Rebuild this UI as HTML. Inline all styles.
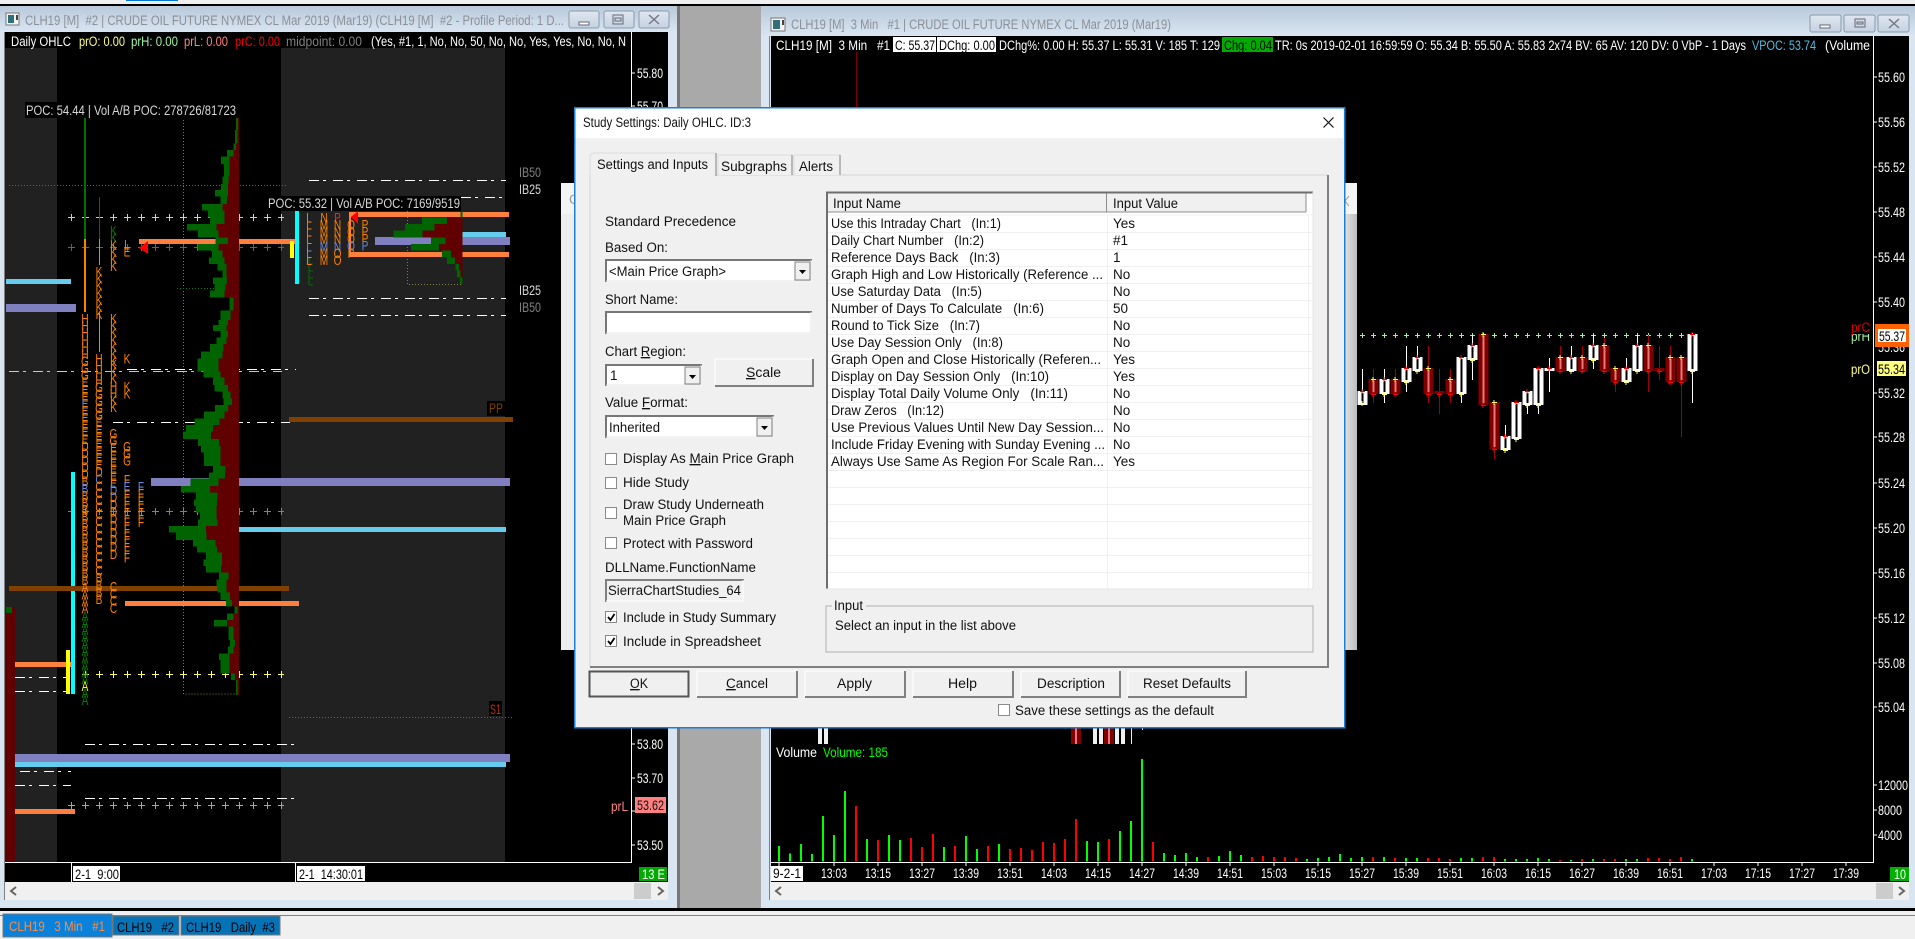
<!DOCTYPE html>
<html lang="en"><head><meta charset="utf-8"><title>Study Settings</title>
<style>
html,body{margin:0;padding:0;background:#000;width:1915px;height:939px;overflow:hidden}
svg{display:block}
text{font-family:"Liberation Sans",sans-serif;white-space:pre}
rect,path,line{shape-rendering:crispEdges}
.aa{shape-rendering:auto}
.c{font-size:13.5px;fill:#fff}
.d{font-size:13.5px;fill:#111}
.t{font-size:13.5px;fill:#8b9097}
.v{writing-mode:vertical-rl;text-orientation:upright;font-size:14px;letter-spacing:-9px;fill:#ff8000}
.b{fill:#6a88e0}
.u{text-decoration:underline}
.dd{stroke-dasharray:10 4 3 7;stroke:#fff;fill:none}
</style></head><body>
<svg xmlns="http://www.w3.org/2000/svg" width="1915" height="939" viewBox="0 0 1915 939">
<defs>
<linearGradient id="tb" x1="0" y1="0" x2="0" y2="1"><stop offset="0" stop-color="#b9c9da"/><stop offset="1" stop-color="#d9e5f1"/></linearGradient>
<linearGradient id="bt" x1="0" y1="0" x2="0" y2="1"><stop offset="0" stop-color="#dfe7f0"/><stop offset="1" stop-color="#c4d2e0"/></linearGradient>
<linearGradient id="sh" x1="0" y1="0" x2="1" y2="0"><stop offset="0" stop-color="#e4e4e4"/><stop offset="1" stop-color="#bcbcbc"/></linearGradient>
</defs>

<!-- desktop -->
<rect width="1915" height="939" fill="#a9a9a9"/>
<rect width="1915" height="4" fill="#f0f0f0"/>
<rect x="126" width="52" height="1" fill="#0078d7"/>
<rect y="4" width="1915" height="2" fill="#000"/>

<!-- LEFT WINDOW -->
<rect x="0" y="6" width="677" height="902" fill="#d9e5f1"/>
<rect x="677" y="6" width="3" height="902" fill="#777"/>
<rect x="0" y="6" width="677" height="26" fill="url(#tb)"/>
<rect x="4" y="32" width="1" height="868" fill="#808080"/>
<rect x="6" y="13" width="13" height="12" fill="#f4f4f4" stroke="#777"/>
<rect x="8" y="15" width="6" height="8" fill="#2f6f78"/>
<rect x="16" y="15" width="2" height="5" fill="#444"/>
<text class="t" x="25" y="25" textLength="539" lengthAdjust="spacingAndGlyphs">CLH19 [M]  #2 | CRUDE OIL FUTURE NYMEX CL Mar 2019 (Mar19) (CLH19 [M]  #2 - Profile Period: 1 D...</text>
<rect x="569" y="11" width="30" height="17" rx="2" fill="url(#bt)" stroke="#8a9aac"/>
<rect x="579" y="22" width="10" height="3" fill="#fff" stroke="#667"/>
<rect x="604" y="11" width="30" height="17" rx="2" fill="url(#bt)" stroke="#8a9aac"/>
<rect x="613" y="15" width="10" height="9" fill="none" stroke="#667"/><rect x="615" y="18" width="6" height="3" fill="none" stroke="#667"/>
<rect x="639" y="11" width="30" height="17" rx="2" fill="url(#bt)" stroke="#8a9aac"/>
<path class="aa" d="M649 15l10 9M659 15l-10 9" stroke="#778" stroke-width="1.500" fill="none"/>

<rect x="5" y="32" width="663" height="850" fill="#000"/>
<rect x="5" y="48" width="52" height="814" fill="#212121"/>
<rect x="281" y="48" width="224" height="814" fill="#212121"/>

<!-- dotted boxes -->
<path d="M183.5 117V694H239M183 117.5H239M407.5 211V284.5H463" fill="none" stroke="#808040" stroke-dasharray="1 2"/>
<path d="M9 185.500H288" stroke="#c04020" stroke-dasharray="1 2"/>
<path d="M289 717.500H512" stroke="#c04020" stroke-dasharray="1 2"/>
<path d="M177 288.500H240" stroke="#0a7a0a" stroke-dasharray="1 2"/>

<!-- plus rows -->
<g fill="none">
<path d="M68 217.500H284" stroke="#a0f0a0" stroke-dasharray="7 7"/><path d="M71 217.500H282" stroke="#a0f0a0" stroke-width="7" stroke-dasharray="1 13"/>
<path d="M68 247.500H284" stroke="#ff2020" stroke-dasharray="7 7"/><path d="M71 247.500H282" stroke="#ff2020" stroke-width="7" stroke-dasharray="1 13"/>
<path d="M68 511.500H284" stroke="#808080" stroke-dasharray="7 7"/><path d="M71 511.500H282" stroke="#808080" stroke-width="7" stroke-dasharray="1 13"/>
<path d="M82 674.500H284" stroke="#ffff60" stroke-dasharray="7 7"/><path d="M85 674.500H282" stroke="#ffff60" stroke-width="7" stroke-dasharray="1 13"/>
<path d="M68 805.500H284" stroke="#ff8080" stroke-dasharray="7 7"/><path d="M71 805.500H282" stroke="#ff8080" stroke-width="7" stroke-dasharray="1 13"/>
</g>

<!-- dash-dot lines -->
<g>
<path class="dd" d="M309 180.500H506"/><path class="dd" d="M461 197.500H506"/><path class="dd" d="M309 298.500H506"/><path class="dd" d="M309 315.500H506"/>
<path class="dd" d="M127 369.500H296"/><path class="dd" style="stroke:#c8c8c8" d="M9 371.500H282"/><path class="dd" d="M113 422.500H290"/>
<path class="dd" d="M85 744.500H296"/><path class="dd" d="M85 798.500H296"/>
<path class="dd" d="M15 677.500H67"/><path class="dd" d="M15 691.500H67"/><path class="dd" d="M20 771.500H71"/><path class="dd" d="M15 785.500H71"/>
</g>

<!-- thick lines -->
<g>
<rect x="6" y="607" width="9" height="255" fill="#600000"/><rect x="6" y="607" width="6" height="6" fill="#006000"/>
<rect x="139" y="239" width="156" height="5" fill="#ff7f3f"/>
<rect x="349" y="212" width="160" height="5" fill="#ff7f3f"/>
<rect x="349" y="252" width="160" height="5" fill="#ff7f3f"/>
<rect x="349" y="212" width="2" height="45" fill="#ff7f3f"/>
<rect x="462" y="232" width="44" height="5" fill="#66ccee"/>
<rect x="375" y="237" width="135" height="8" fill="#8080c0"/>
<rect x="6" y="279" width="65" height="5" fill="#66ccee"/>
<rect x="6" y="304" width="70" height="8" fill="#8080c0"/>
<rect x="151" y="478" width="359" height="8" fill="#8080c0"/>
<rect x="239" y="527" width="267" height="5" fill="#66ccee"/>
<rect x="15" y="754" width="495" height="8" fill="#8080c0"/>
<rect x="15" y="762" width="491" height="5" fill="#66ccee"/>
<rect x="289" y="417" width="224" height="5" fill="#804000"/>
<rect x="125" y="601" width="174" height="5" fill="#ff7f3f"/>
<rect x="15" y="662" width="56" height="5" fill="#ff7f3f"/>
<rect x="15" y="809" width="60" height="5" fill="#ff7f3f"/>
<rect x="295" y="211" width="4" height="73" fill="#00ffff"/>
<rect x="290" y="241" width="4" height="17" fill="#ffff00"/>
<rect x="71" y="472" width="4" height="222" fill="#00ffff"/>
<rect x="66" y="650" width="4" height="44" fill="#ffff00"/>
<rect x="9" y="586" width="280" height="5" fill="#804000"/>
<path d="M85 117V239" stroke="#007000" stroke-width="2"/><path d="M85 239V312" stroke="#ff8000" stroke-width="2"/>
<path d="M99.500 197V239M309 258V285" stroke="#007000"/><path d="M99.500 239V265M99.500 312V352" stroke="#ff8000"/>
<path d="M309 264h4M309 271h4M309 278h4M309 285h4" stroke="#007000"/>
</g>

<!-- profiles -->
<g transform="scale(.40816 .33333)">
<path fill="#006400" d="M586 351H578V390H576V430H572V450H556V470H541V492H549V530H545V552H542V570H527V590H540V612H495V632H510V652H515V672H458V692H485V712H528V732H485V752H520V772H512V792H533V812H545V832H522V852H525V872H514V892H562V932H540V960H535V975H522V993H540V1012H530V1032H515V1055H492V1075H484V1115H498V1133H522V1155H525V1175H545V1195H548V1215H527V1235H500V1255H476V1275H456V1295H448V1317H485V1338H492V1358H500V1398H522V1418H512V1436H467V1458H443V1478H480V1498H475V1518H480V1538H490V1558H485V1578H414V1598H431V1620H473V1640H483V1658H505V1678H498V1698H505V1718H537V1738H530V1758H533V1778H540V1800H554V1820H574V1840H556V1860H524V1880H560V1920H563V1940H558V1960H537V1980H540V2020H566V2040H578V2085H586Z"/>
<path fill="#600000" d="M586 351H583V390H582V430H578V450H572V470H562V530H560V552H558V590H556V612H545V632H550V672H530V692H535V712H558V732H535V752H545V772H550V792H555V832H556V852H553V872H550V892H572V932H565V960H558V975H555V993H558V1012H555V1032H548V1055H545V1075H535V1115H540V1133H550V1155H558V1175H565V1195H568V1215H558V1235H550V1255H538V1275H522V1295H517V1317H537V1338H540V1398H553V1418H551V1436H535V1458H514V1478H533V1498H532V1518H530V1558H533V1578H505V1598H506V1620H528V1640H532V1658H544V1698H542V1718H560V1738H555V1778H563V1800H568V1820H582V1840H572V1860H556V1880H572V1920H576V1940H572V1960H562V2020H576V2040H582V2085H586Z"/>
<path fill="#006400" d="M1133 634H1128V652H1034V672H992V692H964V712H1056V732H1007V752H1083V772H1095V792H1116V812H1120V832H1127V852H1133Z"/>
<path fill="#600000" d="M1133 652H1095V672H1065V692H1035V712H1092V732H1075V752H1105V772H1115V792H1125V812H1128V832H1133Z"/>
</g>

<!-- TPO letters -->
<g transform="scale(.72 1)">
<text class="v" x="118" y="311">HHHHHHGGGEEE<tspan class="b">E</tspan>EEEEEDDDDDB<tspan class="b">B</tspan>BBBBBBBBBBBBBAAAA<tspan fill="#008000">AAAAAAAAAA</tspan><tspan fill="#ffff00">A</tspan><tspan fill="#008000">AA</tspan></text>
<text class="v" x="137.500" y="264">KKKKKKK</text>
<text class="v" x="137.500" y="351">HHHHGGGGGEEEEEEED<tspan class="b">C</tspan>CCCCCCCCCCCCCBBBB</text>
<text class="v" x="157.600" y="223"><tspan fill="#008000">KK</tspan>KKKK</text>
<text class="v" x="157.600" y="311">KKKKKKK</text>
<text class="v" x="157.600" y="357">KKKHHKK</text>
<text class="v" x="157.600" y="426">GGEEEEEE<tspan class="b">D</tspan>DDDDDDDDD</text>
<text class="v" x="157.600" y="579">CCCC</text>
<text class="v" x="176.400" y="237">LE</text>
<text class="v" x="176.400" y="351">K</text>
<text class="v" x="176.400" y="379">KK</text>
<text class="v" x="176.400" y="439">GGG</text>
<text class="v" x="176.400" y="472">F<tspan class="b">E</tspan>FFFFFFFFFF</text>
<text class="v" x="195.800" y="479"><tspan class="b">F</tspan>FFFFF</text>
<text class="v" x="429.200" y="210">LLLL<tspan class="b">L</tspan>LL</text>
<text class="v" x="450" y="210">NMMM<tspan class="b">M</tspan>MM</text>
<text class="v" x="468.800" y="210"><tspan fill="#ff2020">P</tspan>NNN<tspan class="b">N</tspan>OO</text>
<text class="v" x="487.500" y="217">OOO<tspan class="b">O</tspan>P</text>
<text class="v" x="507" y="217">PPP<tspan class="b">P</tspan></text>
</g>
<polygon points="139,248 148,241 148,254" fill="#ff0000"/>
<polygon points="351,217 358,211 358,224" fill="#ff0000"/>

<!-- labels on left chart -->
<rect x="25" y="102" width="215" height="16" fill="#000"/>
<text class="c" x="26" y="115" style="fill:#d8d8d8" textLength="210" lengthAdjust="spacingAndGlyphs">POC: 54.44 | Vol A/B POC: 278726/81723</text>
<rect x="265" y="196" width="196" height="15" fill="#000"/>
<text class="c" x="268" y="208" style="fill:#d8d8d8" textLength="192" lengthAdjust="spacingAndGlyphs">POC: 55.32 | Vol A/B POC: 7169/9519</text>
<text class="c" x="519" y="177" style="fill:#808080" textLength="22" lengthAdjust="spacingAndGlyphs">IB50</text>
<text class="c" x="519" y="194" style="fill:#d8d8d8" textLength="22" lengthAdjust="spacingAndGlyphs">IB25</text>
<text class="c" x="519" y="295" style="fill:#d8d8d8" textLength="22" lengthAdjust="spacingAndGlyphs">IB25</text>
<text class="c" x="519" y="312" style="fill:#808080" textLength="22" lengthAdjust="spacingAndGlyphs">IB50</text>
<rect x="487" y="401" width="18" height="15" fill="#000"/>
<text class="c" x="489" y="413" style="fill:#804000" textLength="14" lengthAdjust="spacingAndGlyphs">PP</text>
<rect x="489" y="701" width="13" height="15" fill="#000"/>
<text class="c" x="490" y="714" style="fill:#c03000" textLength="11" lengthAdjust="spacingAndGlyphs">S1</text>

<!-- left header -->
<rect x="5" y="32" width="626" height="16" fill="#000"/>
<text class="c" x="11" y="46" textLength="60" lengthAdjust="spacingAndGlyphs">Daily OHLC</text>
<text class="c" x="79" y="46" style="fill:#ffff80" textLength="46" lengthAdjust="spacingAndGlyphs">prO: 0.00</text>
<text class="c" x="131" y="46" style="fill:#a0f0a0" textLength="47" lengthAdjust="spacingAndGlyphs">prH: 0.00</text>
<text class="c" x="184" y="46" style="fill:#ff8080" textLength="44" lengthAdjust="spacingAndGlyphs">prL: 0.00</text>
<text class="c" x="235" y="46" style="fill:#ff0000" textLength="45" lengthAdjust="spacingAndGlyphs">prC: 0.00</text>
<text class="c" x="286" y="46" style="fill:#808080" textLength="76" lengthAdjust="spacingAndGlyphs">midpoint: 0.00</text>
<text class="c" x="371" y="46" textLength="255" lengthAdjust="spacingAndGlyphs">(Yes, #1, 1, No, No, 50, No, No, Yes, Yes, No, No, N</text>

<!-- left axes -->
<rect x="631" y="32" width="1" height="831" fill="#fff"/>
<rect x="5" y="862" width="626" height="1" fill="#fff"/>
<rect x="71" y="862" width="1" height="20" fill="#fff"/>
<rect x="295" y="862" width="1" height="20" fill="#fff"/>
<path d="M632 73h3M632 106h3M632 744h3M632 778h3M632 811h3M632 845h3" stroke="#fff"/>
<text class="c" x="637" y="78" textLength="26" lengthAdjust="spacingAndGlyphs">55.80</text>
<text class="c" x="637" y="111" textLength="26" lengthAdjust="spacingAndGlyphs">55.70</text>
<text class="c" x="637" y="749" textLength="26" lengthAdjust="spacingAndGlyphs">53.80</text>
<text class="c" x="637" y="783" textLength="26" lengthAdjust="spacingAndGlyphs">53.70</text>
<text class="c" x="637" y="850" textLength="26" lengthAdjust="spacingAndGlyphs">53.50</text>
<text class="c" x="611" y="811" style="fill:#ff8080" textLength="17" lengthAdjust="spacingAndGlyphs">prL</text>
<rect x="635" y="797" width="31" height="16" fill="#ff8080"/>
<text class="c" x="637" y="810" style="fill:#111" textLength="27" lengthAdjust="spacingAndGlyphs">53.62</text>
<rect x="73" y="866" width="47" height="15" fill="#fff"/>
<text class="c" x="75" y="879" style="fill:#000" textLength="44" lengthAdjust="spacingAndGlyphs">2-1  9:00</text>
<rect x="297" y="866" width="68" height="15" fill="#fff"/>
<text class="c" x="299" y="879" style="fill:#000" textLength="64" lengthAdjust="spacingAndGlyphs">2-1  14:30:01</text>
<rect x="639" y="867" width="28" height="14" fill="#00aa00"/>
<text class="c" x="642" y="879" textLength="23" lengthAdjust="spacingAndGlyphs">13 E</text>
<rect x="5" y="882" width="663" height="18" fill="#f0f0f0"/>
<path class="aa" d="M16 887l-5 4 5 4" stroke="#666" stroke-width="2" fill="none"/>
<rect x="634" y="883" width="17" height="16" fill="#ccc"/>
<path class="aa" d="M658 887l5 4-5 4" stroke="#666" stroke-width="2" fill="none"/>

<!-- RIGHT WINDOW -->
<rect x="761" y="6" width="1154" height="902" fill="#d9e5f1"/>
<rect x="761" y="6" width="1154" height="30" fill="url(#tb)"/>
<rect x="769" y="36" width="1" height="864" fill="#808080"/>
<rect x="771" y="18" width="14" height="13" fill="#f4f4f4" stroke="#777"/>
<rect x="773" y="20" width="7" height="9" fill="#2f6f78"/>
<rect x="782" y="20" width="2" height="5" fill="#444"/>
<text class="t" x="791" y="29" textLength="380" lengthAdjust="spacingAndGlyphs">CLH19 [M]  3 Min   #1 | CRUDE OIL FUTURE NYMEX CL Mar 2019 (Mar19)</text>
<rect x="1810" y="15" width="31" height="17" rx="2" fill="url(#bt)" stroke="#8a9aac"/>
<rect x="1820" y="25" width="10" height="3" fill="#fff" stroke="#667"/>
<rect x="1844" y="15" width="31" height="17" rx="2" fill="url(#bt)" stroke="#8a9aac"/>
<rect x="1855" y="19" width="10" height="8" fill="none" stroke="#667"/><rect x="1857" y="22" width="6" height="2" fill="none" stroke="#667"/>
<rect x="1878" y="15" width="31" height="17" rx="2" fill="url(#bt)" stroke="#8a9aac"/>
<path class="aa" d="M1889 19l10 9M1899 19l-10 9" stroke="#778" stroke-width="1.500" fill="none"/>

<rect x="771" y="36" width="1138" height="846" fill="#000"/>

<!-- right header -->
<text class="c" x="776" y="50" textLength="114" lengthAdjust="spacingAndGlyphs">CLH19 [M]  3 Min   #1</text>
<rect x="893" y="37" width="43" height="15" fill="#fff"/>
<text class="c" x="895" y="50" style="fill:#000" textLength="40" lengthAdjust="spacingAndGlyphs">C: 55.37</text>
<rect x="937" y="37" width="59" height="15" fill="#fff"/>
<text class="c" x="939" y="50" style="fill:#000" textLength="56" lengthAdjust="spacingAndGlyphs">DChg: 0.00</text>
<text class="c" x="999" y="50" textLength="221" lengthAdjust="spacingAndGlyphs">DChg%: 0.00 H: 55.37 L: 55.31 V: 185 T: 129</text>
<rect x="1222" y="37" width="51" height="15" fill="#00aa00"/>
<text class="c" x="1224" y="50" style="fill:#000" textLength="48" lengthAdjust="spacingAndGlyphs">Chg: 0.04</text>
<text class="c" x="1275" y="50" textLength="471" lengthAdjust="spacingAndGlyphs">TR: 0s 2019-02-01 16:59:59 O: 55.34 B: 55.50 A: 55.83 2x74 BV: 65 AV: 120 DV: 0 VbP - 1 Days</text>
<text class="c" x="1752" y="50" style="fill:#55bbdd" textLength="64" lengthAdjust="spacingAndGlyphs">VPOC: 53.74</text>
<text class="c" x="1825" y="50" textLength="45" lengthAdjust="spacingAndGlyphs">(Volume</text>
<path d="M856.500 52V107" stroke="#800000"/>

<!-- right axis -->
<rect x="1873" y="36" width="1" height="827" fill="#fff"/>
<path d="M1874 77h3M1874 122h3M1874 167h3M1874 212h3M1874 257h3M1874 302h3M1874 393h3M1874 437h3M1874 483h3M1874 528h3M1874 573h3M1874 618h3M1874 663h3M1874 707h3M1874 785h3M1874 810h3M1874 835h3" stroke="#fff"/>
<g>
<text class="c" x="1878" y="82" textLength="27" lengthAdjust="spacingAndGlyphs">55.60</text>
<text class="c" x="1878" y="127" textLength="27" lengthAdjust="spacingAndGlyphs">55.56</text>
<text class="c" x="1878" y="172" textLength="27" lengthAdjust="spacingAndGlyphs">55.52</text>
<text class="c" x="1878" y="217" textLength="27" lengthAdjust="spacingAndGlyphs">55.48</text>
<text class="c" x="1878" y="262" textLength="27" lengthAdjust="spacingAndGlyphs">55.44</text>
<text class="c" x="1878" y="307" textLength="27" lengthAdjust="spacingAndGlyphs">55.40</text>
<text class="c" x="1878" y="352" textLength="27" lengthAdjust="spacingAndGlyphs">55.36</text>
<text class="c" x="1878" y="398" textLength="27" lengthAdjust="spacingAndGlyphs">55.32</text>
<text class="c" x="1878" y="442" textLength="27" lengthAdjust="spacingAndGlyphs">55.28</text>
<text class="c" x="1878" y="488" textLength="27" lengthAdjust="spacingAndGlyphs">55.24</text>
<text class="c" x="1878" y="533" textLength="27" lengthAdjust="spacingAndGlyphs">55.20</text>
<text class="c" x="1878" y="578" textLength="27" lengthAdjust="spacingAndGlyphs">55.16</text>
<text class="c" x="1878" y="623" textLength="27" lengthAdjust="spacingAndGlyphs">55.12</text>
<text class="c" x="1878" y="668" textLength="27" lengthAdjust="spacingAndGlyphs">55.08</text>
<text class="c" x="1878" y="712" textLength="27" lengthAdjust="spacingAndGlyphs">55.04</text>
<text class="c" x="1878" y="790" textLength="30" lengthAdjust="spacingAndGlyphs">12000</text>
<text class="c" x="1878" y="815" textLength="24" lengthAdjust="spacingAndGlyphs">8000</text>
<text class="c" x="1878" y="840" textLength="24" lengthAdjust="spacingAndGlyphs">4000</text>
</g>
<!-- price tags -->
<text class="c" x="1851" y="341" style="fill:#a0f0a0" textLength="19" lengthAdjust="spacingAndGlyphs">prH</text>
<rect x="1850" y="320" width="22" height="14" fill="#000"/>
<text class="c" x="1851" y="332" style="fill:#e00000" textLength="19" lengthAdjust="spacingAndGlyphs">prC</text>
<rect x="1875" y="324" width="34" height="23" fill="#ff6000"/>
<rect x="1878" y="329" width="28" height="13" fill="#fff"/>
<text class="c" x="1879" y="341" style="fill:#000" textLength="26" lengthAdjust="spacingAndGlyphs">55.37</text>
<text class="c" x="1851" y="374" style="fill:#ffff80" textLength="19" lengthAdjust="spacingAndGlyphs">prO</text>
<rect x="1877" y="361" width="29" height="15" fill="#ffff80"/>
<text class="c" x="1878" y="374" style="fill:#000" textLength="27" lengthAdjust="spacingAndGlyphs">55.34</text>

<!-- candles -->
<g fill="none">
<path stroke="#a0f0a0" d="M1360 335.500H1696" stroke-dasharray="5 6"/>
<path stroke="#a0f0a0" stroke-width="5" d="M1362 335.500H1694" stroke-dasharray="1 10"/>
<path stroke="#fff" d="M1362.500 369V405M1384.500 369V403M1406.500 346V392M1417.500 346V371M1461.500 357V403M1472.500 335V380M1505.500 425V450M1516.500 402V439M1527.500 391V414M1538.500 368V414M1549.500 358V392M1571.500 346V371M1593.500 335V369M1626.500 358V382M1637.500 335V371M1692.500 333V403"/>
<path stroke="#a00000" d="M1373.500 369V403M1395.500 369V395M1428.500 346V403M1439.500 369V414M1450.500 369V403M1483.500 334V405M1494.500 402V459M1560.500 346V371M1582.500 346V371M1604.500 338V371M1615.500 368V392M1648.500 335V392M1659.500 346V380M1670.500 346V382M1681.500 357V437"/>
<path stroke="#fff" stroke-width="10" d="M1362.500 391V405M1384.500 379V394M1406.500 368V382M1417.500 357V371M1461.500 357V394M1472.500 345V360M1505.500 436V450M1516.500 402V439M1527.500 391V405M1538.500 368V405M1549.500 368V371M1571.500 357V371M1593.500 345V360M1626.500 368V382M1637.500 345V371M1692.500 334V371"/>
<path stroke="#000" stroke-width="2" d="M1362.500 393V403M1384.500 381V392M1406.500 370V380M1417.500 359V369M1461.500 359V392M1472.500 347V358M1505.500 438V448M1516.500 404V437M1527.500 393V403M1538.500 370V403M1571.500 359V369M1593.500 347V358M1626.500 370V380M1637.500 347V369M1692.500 336V369"/>
<path stroke="#800000" stroke-width="10" d="M1373.500 379V394M1395.500 379V394M1428.500 368V394M1439.500 391V394M1450.500 379V394M1483.500 334V405M1494.500 402V449M1560.500 357V371M1582.500 357V371M1604.500 345V371M1615.500 368V382M1648.500 345V371M1659.500 368V371M1670.500 357V382M1681.500 357V382"/>
<path stroke="#e87878" stroke-width="2" d="M1373.500 381V392M1395.500 381V392M1428.500 370V392M1450.500 381V392M1483.500 336V403M1494.500 404V447M1560.500 359V369M1582.500 359V369M1604.500 347V369M1615.500 370V380M1648.500 347V369M1670.500 359V380M1681.500 359V380"/>
<path stroke="#ff0000" d="M1360 391.500h5M1362 389v5M1371 394.500h5M1373 392v5M1382 379.500h5M1384 377v5M1393 394.500h5M1395 392v5M1404 368.500h5M1406 366v5M1415 357.500h5M1417 355v5M1426 394.500h5M1428 392v5M1437 394.500h5M1439 392v5M1448 394.500h5M1450 392v5M1459 357.500h5M1461 355v5M1470 345.500h5M1472 343v5M1481 405.500h5M1483 403v5M1492 449.500h5M1494 447v5M1503 436.500h5M1505 434v5M1514 402.500h5M1516 400v5M1525 391.500h5M1527 389v5M1536 368.500h5M1538 366v5M1547 368.500h5M1549 366v5M1558 371.500h5M1560 369v5M1569 357.500h5M1571 355v5M1580 371.500h5M1582 369v5M1591 345.500h5M1593 343v5M1602 371.500h5M1604 369v5M1613 382.500h5M1615 380v5M1624 368.500h5M1626 366v5M1635 345.500h5M1637 343v5M1646 371.500h5M1648 369v5M1657 371.500h5M1659 369v5M1668 382.500h5M1670 380v5M1679 382.500h5M1681 380v5M1690 334.500h5M1692 332v5"/>
<path stroke="#ffff60" d="M1360 403.500h5M1362 401v5M1371 379.500h5M1373 377v5M1382 394.500h5M1384 392v5M1393 379.500h5M1395 377v5M1404 382.500h5M1406 380v5M1415 371.500h5M1417 369v5M1426 368.500h5M1428 366v5M1448 379.500h5M1450 377v5M1459 394.500h5M1461 392v5M1470 360.500h5M1472 358v5M1481 334.500h5M1483 332v5M1492 402.500h5M1494 400v5M1503 450.500h5M1505 448v5M1514 439.500h5M1516 437v5M1525 405.500h5M1527 403v5M1536 405.500h5M1538 403v5M1558 357.500h5M1560 355v5M1569 371.500h5M1571 369v5M1580 357.500h5M1582 355v5M1591 360.500h5M1593 358v5M1602 345.500h5M1604 343v5M1613 368.500h5M1615 366v5M1624 382.500h5M1626 380v5M1635 371.500h5M1637 369v5M1646 345.500h5M1648 343v5M1668 357.500h5M1670 355v5M1679 357.500h5M1681 355v5M1690 371.500h5M1692 369v5"/>
</g>

<!-- candle stubs below dialog -->
<rect x="818" y="727" width="4" height="17" fill="#f0f0f0"/><rect x="824" y="727" width="4" height="17" fill="#f0f0f0"/>
<rect x="1071" y="727" width="10" height="17" fill="#800000"/><rect x="1075" y="727" width="2" height="17" fill="#e87878"/>
<rect x="1093" y="727" width="4" height="17" fill="#f0f0f0"/><rect x="1099" y="727" width="4" height="17" fill="#f0f0f0"/>
<rect x="1104" y="727" width="10" height="17" fill="#800000"/><rect x="1108" y="727" width="2" height="17" fill="#e87878"/>
<rect x="1115" y="727" width="4" height="17" fill="#f0f0f0"/><rect x="1121" y="727" width="4" height="17" fill="#f0f0f0"/>
<rect x="1131" y="727" width="1" height="17" fill="#f0f0f0"/><rect x="1142" y="727" width="1" height="3" fill="#f0f0f0"/><rect x="1065" y="727" width="1" height="3" fill="#800000"/>

<!-- volume -->
<text class="c" x="776" y="757" textLength="41" lengthAdjust="spacingAndGlyphs">Volume</text>
<text class="c" x="823" y="757" style="fill:#00ff00" textLength="65" lengthAdjust="spacingAndGlyphs">Volume: 185</text>
<g transform="translate(0 720) scale(1 .33333)" fill="none" stroke-width="2">
<path stroke="#00ff00" d="M779 378V425M790 400V425M801 372V425M812 402V425M823 288V425M834 345V425M845 213V425M867 357V425M889 345V425M900 360V425M944 381V425M966 348V425M977 387V425M999 372V425M1087 363V425M1098 366V425M1120 333V425M1131 303V425M1142 117V425M1164 399V425M1175 405V425M1186 399V425M1197 411V425M1219 408V425M1230 393V425M1241 405V425M1307 417V425M1318 414V425M1329 411V425M1340 402V425M1351 414V425M1362 411V425M1384 411V425M1406 414V425M1417 414V425M1461 414V425M1472 414V425M1505 417V425M1516 417V425M1527 417V425M1538 414V425M1549 417V425M1571 420V425M1593 417V425M1626 417V425M1637 417V425M1692 417V425"/>
<path stroke="#ff0000" d="M856 258V425M878 360V425M911 354V425M922 381V425M933 342V425M955 378V425M988 378V425M1010 387V425M1021 384V425M1032 390V425M1043 366V425M1054 369V425M1065 357V425M1076 297V425M1109 357V425M1153 366V425M1208 411V425M1252 411V425M1263 408V425M1274 411V425M1285 411V425M1296 414V425M1373 411V425M1395 414V425M1428 414V425M1439 414V425M1450 417V425M1483 411V425M1494 411V425M1560 420V425M1582 417V425M1604 417V425M1615 417V425M1648 414V425M1659 414V425M1670 417V425M1681 411V425"/>
</g>

<!-- time axis -->
<rect x="771" y="862" width="1103" height="1" fill="#fff"/>
<path d="M779 863v3M834 863v3M878 863v3M922 863v3M966 863v3M1010 863v3M1054 863v3M1098 863v3M1142 863v3M1186 863v3M1230 863v3M1274 863v3M1318 863v3M1362 863v3M1406 863v3M1450 863v3M1494 863v3M1538 863v3M1582 863v3M1626 863v3M1670 863v3M1714 863v3M1758 863v3M1802 863v3M1846 863v3" stroke="#fff"/>
<rect x="771" y="866" width="32" height="15" fill="#fff"/>
<text class="c" x="773" y="878" style="fill:#000" textLength="28" lengthAdjust="spacingAndGlyphs">9-2-1</text>
<g text-anchor="middle">
<text class="c" x="834" y="878" textLength="26" lengthAdjust="spacingAndGlyphs">13:03</text>
<text class="c" x="878" y="878" textLength="26" lengthAdjust="spacingAndGlyphs">13:15</text>
<text class="c" x="922" y="878" textLength="26" lengthAdjust="spacingAndGlyphs">13:27</text>
<text class="c" x="966" y="878" textLength="26" lengthAdjust="spacingAndGlyphs">13:39</text>
<text class="c" x="1010" y="878" textLength="26" lengthAdjust="spacingAndGlyphs">13:51</text>
<text class="c" x="1054" y="878" textLength="26" lengthAdjust="spacingAndGlyphs">14:03</text>
<text class="c" x="1098" y="878" textLength="26" lengthAdjust="spacingAndGlyphs">14:15</text>
<text class="c" x="1142" y="878" textLength="26" lengthAdjust="spacingAndGlyphs">14:27</text>
<text class="c" x="1186" y="878" textLength="26" lengthAdjust="spacingAndGlyphs">14:39</text>
<text class="c" x="1230" y="878" textLength="26" lengthAdjust="spacingAndGlyphs">14:51</text>
<text class="c" x="1274" y="878" textLength="26" lengthAdjust="spacingAndGlyphs">15:03</text>
<text class="c" x="1318" y="878" textLength="26" lengthAdjust="spacingAndGlyphs">15:15</text>
<text class="c" x="1362" y="878" textLength="26" lengthAdjust="spacingAndGlyphs">15:27</text>
<text class="c" x="1406" y="878" textLength="26" lengthAdjust="spacingAndGlyphs">15:39</text>
<text class="c" x="1450" y="878" textLength="26" lengthAdjust="spacingAndGlyphs">15:51</text>
<text class="c" x="1494" y="878" textLength="26" lengthAdjust="spacingAndGlyphs">16:03</text>
<text class="c" x="1538" y="878" textLength="26" lengthAdjust="spacingAndGlyphs">16:15</text>
<text class="c" x="1582" y="878" textLength="26" lengthAdjust="spacingAndGlyphs">16:27</text>
<text class="c" x="1626" y="878" textLength="26" lengthAdjust="spacingAndGlyphs">16:39</text>
<text class="c" x="1670" y="878" textLength="26" lengthAdjust="spacingAndGlyphs">16:51</text>
<text class="c" x="1714" y="878" textLength="26" lengthAdjust="spacingAndGlyphs">17:03</text>
<text class="c" x="1758" y="878" textLength="26" lengthAdjust="spacingAndGlyphs">17:15</text>
<text class="c" x="1802" y="878" textLength="26" lengthAdjust="spacingAndGlyphs">17:27</text>
<text class="c" x="1846" y="878" textLength="26" lengthAdjust="spacingAndGlyphs">17:39</text>
</g>
<rect x="1890" y="867" width="19" height="14" fill="#00b000"/>
<text class="c" x="1894" y="879" textLength="12" lengthAdjust="spacingAndGlyphs">10</text>
<rect x="770" y="882" width="1139" height="18" fill="#f0f0f0"/>
<path class="aa" d="M781 887l-5 4 5 4" stroke="#666" stroke-width="2" fill="none"/>
<rect x="1876" y="883" width="17" height="16" fill="#ccc"/>
<path class="aa" d="M1899 887l5 4-5 4" stroke="#666" stroke-width="2" fill="none"/>

<!-- task/tab bar -->
<rect x="0" y="908" width="1915" height="3" fill="#000"/>
<rect x="0" y="911" width="1915" height="28" fill="#f0f0f0"/>
<rect x="0" y="915" width="1915" height="1" fill="#808080"/>
<rect x="3" y="914" width="109" height="23" fill="#0a82dc" stroke="#777"/>
<text class="c" x="9" y="931" style="fill:#ff8c40" textLength="96" lengthAdjust="spacingAndGlyphs">CLH19   3 Min   #1</text>
<rect x="113" y="916" width="66" height="19" fill="#0673b6" stroke="#777"/>
<text class="c" x="117" y="932" style="fill:#000" textLength="57" lengthAdjust="spacingAndGlyphs">CLH19   #2</text>
<rect x="181" y="916" width="99" height="19" fill="#0673b6" stroke="#777"/>
<text class="c" x="186" y="932" style="fill:#000" textLength="89" lengthAdjust="spacingAndGlyphs">CLH19   Daily  #3</text>

<!-- BACK DIALOG -->
<rect x="561" y="183" width="796" height="467" fill="#ededed"/>
<rect x="561" y="183" width="796" height="31" fill="#f4f4f4"/>
<rect x="1344" y="214" width="13" height="436" fill="url(#sh)"/>
<text class="d" x="569" y="204" style="fill:#999">C</text>
<path class="aa" d="M1349 196l-4 5 4 5" stroke="#999" fill="none"/>

<!-- DIALOG -->
<rect x="574" y="107" width="770" height="620" fill="#f0f0f0"/>
<rect x="575" y="108" width="768" height="30" fill="#fff"/>
<rect x="574.500" y="107.500" width="770" height="620" fill="none" stroke="#1a80d4" stroke-width="1.500"/>
<text class="d" x="583" y="127" textLength="168" lengthAdjust="spacingAndGlyphs">Study Settings: Daily OHLC. ID:3</text>
<path class="aa" d="M1323.500 117.500l10 10M1333.500 117.500l-10 10" stroke="#111" stroke-width="1.200" fill="none"/>

<!-- tab sheet -->
<path d="M590 667V175H1328" fill="none" stroke="#e2e2e2" stroke-width="2"/>
<path d="M1328 175V667H590" fill="none" stroke="#808080" stroke-width="2"/>
<path d="M590 176V157q0-4 4-4H716V176" fill="#f0f0f0" stroke="#dcdcdc"/>
<path d="M716 153V176" stroke="#808080"/>
<text class="d" x="597" y="169" textLength="111" lengthAdjust="spacingAndGlyphs">Settings and Inputs</text>
<path d="M718 175V155H792V175" fill="#f0f0f0" stroke="#dcdcdc"/><path d="M792 155V175" stroke="#808080"/>
<text class="d" x="721" y="171" textLength="66" lengthAdjust="spacingAndGlyphs">Subgraphs</text>
<path d="M794 175V155H840V175" fill="#f0f0f0" stroke="#dcdcdc"/><path d="M840 155V175" stroke="#808080"/>
<text class="d" x="799" y="171" textLength="34" lengthAdjust="spacingAndGlyphs">Alerts</text>

<!-- left column -->
<text class="d" x="605" y="226" textLength="131" lengthAdjust="spacingAndGlyphs">Standard Precedence</text>
<text class="d" x="605" y="252" textLength="63" lengthAdjust="spacingAndGlyphs">Based On:</text>
<rect x="605" y="259" width="207" height="23" fill="#fff"/>
<path d="M606 282V260H812" fill="none" stroke="#777" stroke-width="2"/><path d="M811 260V281H606" fill="none" stroke="#e4e4e4"/>
<rect x="795" y="262" width="15" height="18" fill="#f0f0f0" stroke="#808080"/>
<polygon points="799,270 806,270 802.500,274" fill="#000"/>
<text class="d" x="609" y="276" textLength="117" lengthAdjust="spacingAndGlyphs">&lt;Main Price Graph&gt;</text>
<text class="d" x="605" y="304" textLength="73" lengthAdjust="spacingAndGlyphs">Short Name:</text>
<rect x="605" y="311" width="207" height="23" fill="#fff"/>
<path d="M606 334V312H812" fill="none" stroke="#777" stroke-width="2"/><path d="M811 312V333H606" fill="none" stroke="#e4e4e4"/>
<text class="d" x="605" y="356" textLength="81" lengthAdjust="spacingAndGlyphs">Chart <tspan class="u">R</tspan>egion:</text>
<rect x="605" y="364" width="97" height="22" fill="#fff"/>
<path d="M606 386V365H702" fill="none" stroke="#777" stroke-width="2"/><path d="M701 365V385H606" fill="none" stroke="#e4e4e4"/>
<rect x="685" y="367" width="15" height="17" fill="#f0f0f0" stroke="#808080"/>
<polygon points="689,375 696,375 692.500,379" fill="#000"/>
<text class="d" x="610" y="380">1</text>
<rect x="715" y="359" width="98" height="27" fill="#f0f0f0"/>
<path d="M715 386V359H813" fill="none" stroke="#fff"/><path d="M813 359V386H715" fill="none" stroke="#808080" stroke-width="2"/>
<text class="d" x="746" y="377" textLength="35" lengthAdjust="spacingAndGlyphs"><tspan class="u">S</tspan>cale</text>
<text class="d" x="605" y="407" textLength="83" lengthAdjust="spacingAndGlyphs">Value <tspan class="u">F</tspan>ormat:</text>
<rect x="605" y="415" width="169" height="23" fill="#fff"/>
<path d="M606 438V416H774" fill="none" stroke="#777" stroke-width="2"/><path d="M773 416V437H606" fill="none" stroke="#e4e4e4"/>
<rect x="757" y="418" width="15" height="18" fill="#f0f0f0" stroke="#808080"/>
<polygon points="761,426 768,426 764.500,430" fill="#000"/>
<text class="d" x="609" y="432" textLength="51" lengthAdjust="spacingAndGlyphs">Inherited</text>

<g fill="#fff">
<rect x="605.500" y="453.500" width="11" height="11" stroke="#8a8a8a"/>
<rect x="605.500" y="477.500" width="11" height="11" stroke="#8a8a8a"/>
<rect x="605.500" y="507.500" width="11" height="11" stroke="#8a8a8a"/>
<rect x="605.500" y="537.500" width="11" height="11" stroke="#8a8a8a"/>
<rect x="605.500" y="611.500" width="11" height="11" stroke="#8a8a8a"/>
<rect x="605.500" y="635.500" width="11" height="11" stroke="#8a8a8a"/>
</g>
<path class="aa" d="M608 617l2.500 3 4-6M608 641l2.500 3 4-6" stroke="#000" stroke-width="1.800" fill="none"/>
<text class="d" x="623" y="463" textLength="171" lengthAdjust="spacingAndGlyphs">Display As <tspan class="u">M</tspan>ain Price Graph</text>
<text class="d" x="623" y="487" textLength="66" lengthAdjust="spacingAndGlyphs">Hide Study</text>
<text class="d" x="623" y="509" textLength="141" lengthAdjust="spacingAndGlyphs">Draw Study Underneath</text>
<text class="d" x="623" y="525" textLength="103" lengthAdjust="spacingAndGlyphs">Main Price Graph</text>
<text class="d" x="623" y="548" textLength="130" lengthAdjust="spacingAndGlyphs">Protect with Password</text>
<text class="d" x="605" y="572" textLength="151" lengthAdjust="spacingAndGlyphs">DLLName.FunctionName</text>
<path d="M606 602V580H744" fill="none" stroke="#808080" stroke-width="2"/><path d="M743 580V601H606" fill="none" stroke="#fff"/>
<text class="d" x="608" y="595" textLength="133" lengthAdjust="spacingAndGlyphs">SierraChartStudies_64</text>
<text class="d" x="623" y="622" textLength="153" lengthAdjust="spacingAndGlyphs">Include in Study Summary</text>
<text class="d" x="623" y="646" textLength="138" lengthAdjust="spacingAndGlyphs">Include in Spreadsheet</text>

<!-- list -->
<rect x="826" y="192" width="487" height="397" fill="#fff"/>
<rect x="828" y="193" width="478" height="19" fill="#f0f0f0"/>
<path d="M1306 212H828M1106.500 193V212M1306 193V212" stroke="#8c8c8c" fill="none"/>
<path d="M827 589V192.500H1313" fill="none" stroke="#6e6e6e" stroke-width="2"/>
<path d="M1313 192V589H826" fill="none" stroke="#e6e6e6"/>
<path stroke="#f0f0f0" fill="none" d="M828 215H1313M828 232.500H1313M828 249.500H1313M828 266.500H1313M828 283.500H1313M828 300.500H1313M828 317.500H1313M828 334.500H1313M828 351.500H1313M828 368.500H1313M828 385.500H1313M828 402.500H1313M828 419.500H1313M828 436.500H1313M828 453.500H1313M828 470.500H1313M828 487.500H1313M828 504.500H1313M828 521.500H1313M828 538.500H1313M828 555.500H1313M828 572.500H1313M1107.500 215V589M1308.500 215V589"/>
<text class="d" x="833" y="208" textLength="68" lengthAdjust="spacingAndGlyphs">Input Name</text>
<text class="d" x="1113" y="208" textLength="65" lengthAdjust="spacingAndGlyphs">Input Value</text>
<g>
<text class="d" x="831" y="228" textLength="170" lengthAdjust="spacingAndGlyphs">Use this Intraday Chart   (In:1)</text>
<text class="d" x="831" y="245" textLength="153" lengthAdjust="spacingAndGlyphs">Daily Chart Number   (In:2)</text>
<text class="d" x="831" y="262" textLength="169" lengthAdjust="spacingAndGlyphs">Reference Days Back   (In:3)</text>
<text class="d" x="831" y="279" textLength="272" lengthAdjust="spacingAndGlyphs">Graph High and Low Historically (Reference ...</text>
<text class="d" x="831" y="296" textLength="151" lengthAdjust="spacingAndGlyphs">Use Saturday Data   (In:5)</text>
<text class="d" x="831" y="313" textLength="213" lengthAdjust="spacingAndGlyphs">Number of Days To Calculate   (In:6)</text>
<text class="d" x="831" y="330" textLength="149" lengthAdjust="spacingAndGlyphs">Round to Tick Size   (In:7)</text>
<text class="d" x="831" y="347" textLength="172" lengthAdjust="spacingAndGlyphs">Use Day Session Only   (In:8)</text>
<text class="d" x="831" y="364" textLength="270" lengthAdjust="spacingAndGlyphs">Graph Open and Close Historically (Referen...</text>
<text class="d" x="831" y="381" textLength="218" lengthAdjust="spacingAndGlyphs">Display on Day Session Only   (In:10)</text>
<text class="d" x="831" y="398" textLength="237" lengthAdjust="spacingAndGlyphs">Display Total Daily Volume Only   (In:11)</text>
<text class="d" x="831" y="415" textLength="113" lengthAdjust="spacingAndGlyphs">Draw Zeros   (In:12)</text>
<text class="d" x="831" y="432" textLength="273" lengthAdjust="spacingAndGlyphs">Use Previous Values Until New Day Session...</text>
<text class="d" x="831" y="449" textLength="274" lengthAdjust="spacingAndGlyphs">Include Friday Evening with Sunday Evening ...</text>
<text class="d" x="831" y="466" textLength="273" lengthAdjust="spacingAndGlyphs">Always Use Same As Region For Scale Ran...</text>
<text class="d" x="1113" y="228">Yes</text>
<text class="d" x="1113" y="245">#1</text>
<text class="d" x="1113" y="262">1</text>
<text class="d" x="1113" y="279">No</text>
<text class="d" x="1113" y="296">No</text>
<text class="d" x="1113" y="313">50</text>
<text class="d" x="1113" y="330">No</text>
<text class="d" x="1113" y="347">No</text>
<text class="d" x="1113" y="364">Yes</text>
<text class="d" x="1113" y="381">Yes</text>
<text class="d" x="1113" y="398">No</text>
<text class="d" x="1113" y="415">No</text>
<text class="d" x="1113" y="432">No</text>
<text class="d" x="1113" y="449">No</text>
<text class="d" x="1113" y="466">Yes</text>
</g>

<!-- group box -->
<rect x="826" y="606" width="487" height="46" fill="none" stroke="#b0b0b0"/>
<rect x="832" y="600" width="34" height="12" fill="#f0f0f0"/>
<text class="d" x="834" y="610" textLength="29" lengthAdjust="spacingAndGlyphs">Input</text>
<text class="d" x="835" y="630" textLength="181" lengthAdjust="spacingAndGlyphs">Select an input in the list above</text>

<!-- buttons -->
<rect x="589.500" y="671.500" width="99" height="25" fill="#f0f0f0" stroke="#555" stroke-width="2"/>
<text class="d" x="630" y="688" textLength="18" lengthAdjust="spacingAndGlyphs"><tspan class="u">O</tspan>K</text>
<g fill="#f0f0f0">
<path d="M697 697V671H797" stroke="#fff"/><path d="M797 671V697H697" stroke="#808080" stroke-width="2"/>
<path d="M805 697V671H905" stroke="#fff"/><path d="M905 671V697H805" stroke="#808080" stroke-width="2"/>
<path d="M913 697V671H1013" stroke="#fff"/><path d="M1013 671V697H913" stroke="#808080" stroke-width="2"/>
<path d="M1021 697V671H1120" stroke="#fff"/><path d="M1120 671V697H1021" stroke="#808080" stroke-width="2"/>
<path d="M1128 697V671H1246" stroke="#fff"/><path d="M1246 671V697H1128" stroke="#808080" stroke-width="2"/>
</g>
<text class="d" x="726" y="688" textLength="42" lengthAdjust="spacingAndGlyphs"><tspan class="u">C</tspan>ancel</text>
<text class="d" x="837" y="688" textLength="35" lengthAdjust="spacingAndGlyphs">Apply</text>
<text class="d" x="948" y="688" textLength="29" lengthAdjust="spacingAndGlyphs">Help</text>
<text class="d" x="1037" y="688" textLength="68" lengthAdjust="spacingAndGlyphs">Description</text>
<text class="d" x="1143" y="688" textLength="88" lengthAdjust="spacingAndGlyphs">Reset Defaults</text>
<rect x="998.500" y="704.500" width="11" height="11" fill="#fff" stroke="#8a8a8a"/>
<text class="d" x="1015" y="715" textLength="199" lengthAdjust="spacingAndGlyphs">Save these settings as the default</text>
</svg>
</body></html>
